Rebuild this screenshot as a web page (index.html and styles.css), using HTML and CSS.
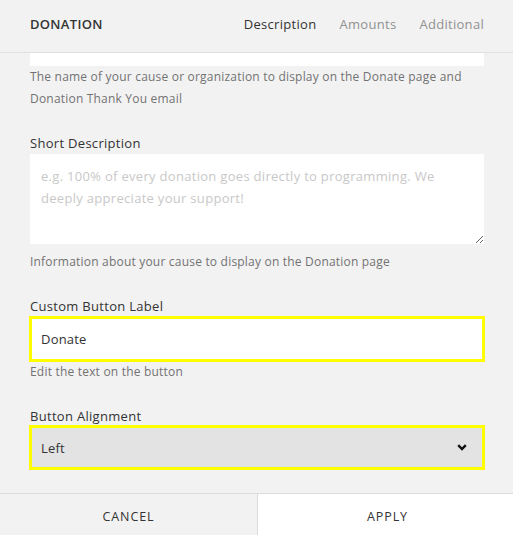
FILE: index.html
```html
<!DOCTYPE html>
<html>
<head>
<meta charset="utf-8">
<link rel="stylesheet" href="styles.css">
</head>
<body>
<div class="panel">
  <header class="header">
    <div class="title">DONATION</div>
    <nav class="tabs">
      <span class="tab active">Description</span>
      <span class="tab">Amounts</span>
      <span class="tab">Additional</span>
    </nav>
  </header>
  <main class="content">
    <div class="strip"></div>
    <p class="help first">The name of your cause or organization to display on the Donate page and Donation Thank You email</p>

    <label class="label">Short Description</label>
    <textarea class="textarea" placeholder="e.g. 100% of every donation goes directly to programming. We deeply appreciate your support!"></textarea>
    <p class="help after-area">Information about your cause to display on the Donation page</p>

    <label class="label">Custom Button Label</label>
    <div class="field focus"><span class="value">Donate</span></div>
    <p class="help after-field">Edit the text on the button</p>

    <label class="label">Button Alignment</label>
    <div class="field select focus">
      <span class="value">Left</span>
      <svg class="chevron" width="10" height="7" viewBox="0 0 10 7"><path d="M1.2 1.2 L5 5 L8.8 1.2" fill="none" stroke="#111" stroke-width="2.4"/></svg>
    </div>
  </main>
  <footer class="footer">
    <div class="btn cancel">CANCEL</div>
    <div class="btn apply">APPLY</div>
  </footer>
</div>
</body>
</html>
```
FILE: styles.css
```css
* { box-sizing: border-box; }
html, body { margin: 0; padding: 0; }
body {
  font-family: "Open Sans", "Liberation Sans", sans-serif;
  background: #f2f2f2;
  color: #333;
}
.panel {
  width: 513px;
  height: 535px;
  display: flex;
  flex-direction: column;
  background: #f2f2f2;
  overflow: hidden;
}
.header {
  height: 53px;
  flex: none;
  display: flex;
  align-items: center;
  justify-content: space-between;
  padding: 0 29px 4px 30px;
  border-bottom: 1px solid #e0e0e0;
}
.title {
  font-size: 13px;
  font-weight: 600;
  letter-spacing: 0.3px;
  color: #333;
}
.tabs { display: flex; gap: 23px; }
.tab { font-size: 13px; color: #919191; letter-spacing: 0.3px; }
.tab.active { color: #333; font-weight: 500; }
.content {
  flex: 1;
  overflow: hidden;
  padding: 0 29px 0 30px;
  display: flex;
  flex-direction: column;
}
.strip { height: 13px; background: #fff; flex: none; }
.help {
  margin: 0;
  font-size: 12px;
  line-height: 22px;
  color: #727272;
  letter-spacing: 0.2px;
}
.help.after-area { margin-top: 7px; }
.help.after-field { margin-top: -1px; }
.label {
  display: block;
  margin-top: 22px;
  font-size: 13px;
  line-height: 22px;
  color: #333;
  letter-spacing: 0.3px;
}
.textarea {
  display: block;
  width: 100%;
  height: 90px;
  border: none;
  outline: none;
  background: #fff;
  padding: 11px 11px;
  font-family: inherit;
  font-size: 13px;
  line-height: 22px;
  letter-spacing: 0.3px;
  color: #333;
  resize: vertical;
}
.textarea::placeholder { color: #c8c8c8; }
.field {
  height: 46px;
  margin: -1px -1px 0 -1px;
  border: 3px solid #ffff00;
  background: #fff;
  display: flex;
  align-items: center;
  padding: 0 15px 0 9px;
  font-size: 13px;
  letter-spacing: 0.2px;
  color: #333;
}
.field.select {
  height: 45px;
  margin-top: -2px;
  background: #e3e3e3;
  justify-content: space-between;
}
.chevron { display: block; }
.footer {
  height: 42px;
  flex: none;
  display: flex;
  border-top: 1px solid #dcdcdc;
}
.btn {
  flex: 1;
  display: flex;
  align-items: center;
  justify-content: center;
  padding-top: 4px;
  font-size: 12.5px;
  letter-spacing: 0.9px;
  color: #333;
}
.cancel { background: #f2f2f2; border-right: 1px solid #dcdcdc; flex: 0 0 258px; }
.apply { background: #fff; padding-left: 4px; }
```
